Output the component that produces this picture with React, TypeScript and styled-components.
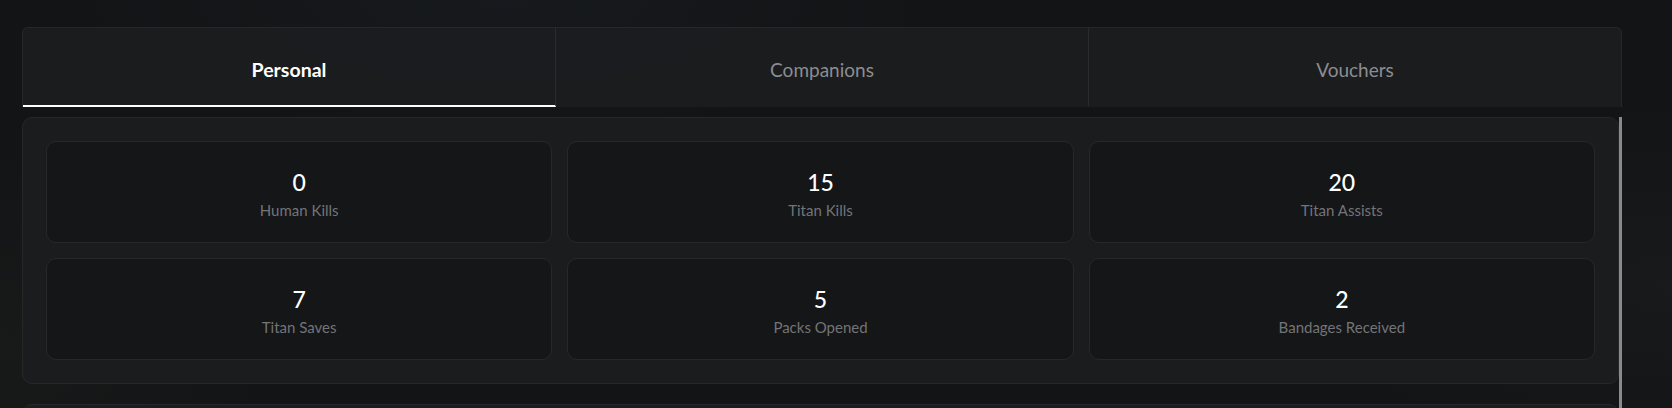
import React, { useState } from 'react';
import styled, { createGlobalStyle } from 'styled-components';

const GlobalStyle = createGlobalStyle`
  * {
    box-sizing: border-box;
  }
  html, body {
    margin: 0;
    height: 100%;
    overflow: hidden;
  }
  body {
    font-family: Lato, 'Open Sans', sans-serif;
    color: #fff;
    background:
      radial-gradient(ellipse 380px 280px at 0% 85%, rgba(30, 33, 29, 0.45), transparent 70%),
      radial-gradient(ellipse 600px 200px at 30% 0%, rgba(26, 30, 36, 0.5), transparent 70%),
      radial-gradient(ellipse 500px 260px at 100% 70%, rgba(30, 32, 32, 0.45), transparent 70%),
      #131416;
  }
`;

const Page = styled.div`
  width: 1600px;
  margin-left: 22px;
  padding-top: 27px;
`;

const TabBar = styled.div`
  display: flex;
  height: 80px;
  border: 1px solid #26272a;
  border-bottom: none;
  border-radius: 6px 6px 0 0;
  background: rgba(28, 29, 32, 0.92);
  overflow: hidden;
`;

const Tab = styled.button<{ active: boolean }>`
  flex: 1;
  display: flex;
  align-items: center;
  justify-content: center;
  padding: 6px 0 0;
  background: transparent;
  border: none;
  border-right: 1px solid #2a2b2e;
  border-bottom: 2px solid ${(p) => (p.active ? '#ffffff' : 'transparent')};
  color: ${(p) => (p.active ? '#ffffff' : '#8c8d90')};
  font-family: inherit;
  font-size: ${(p) => (p.active ? '19.5px' : '19px')};
  font-weight: ${(p) => (p.active ? 700 : 400)};
  cursor: pointer;
  &:last-child {
    border-right: none;
  }
`;

const ScrollArea = styled.div`
  display: flex;
  margin-top: 10px;
  height: 560px;
  overflow: hidden;
`;

const ScrollContent = styled.div`
  flex: 1;
  min-width: 0;
`;

const ScrollThumb = styled.div`
  width: 3px;
  flex-shrink: 0;
  background: #8a8a8b;
`;

const Panel = styled.div<{ minHeight?: number }>`
  background: #1b1c1e;
  border: 1px solid #26272a;
  border-radius: 10px;
  padding: 23px;
  margin-bottom: 20px;
  min-height: ${(p) => (p.minHeight ? `${p.minHeight}px` : 'auto')};
`;

const StatGrid = styled.div`
  display: grid;
  grid-template-columns: repeat(3, 1fr);
  gap: 15px;
`;

const StatCard = styled.div`
  height: 102px;
  display: flex;
  flex-direction: column;
  align-items: center;
  padding-top: 26px;
  gap: 4px;
  background: #151618;
  border: 1px solid #27282b;
  border-radius: 10px;
`;

const StatValue = styled.div`
  font-size: 23px;
  font-weight: 500;
  line-height: 28px;
  color: #ffffff;
`;

const StatLabel = styled.div`
  font-size: 15px;
  line-height: 20px;
  color: #737477;
`;

const tabs = ['Personal', 'Companions', 'Vouchers'];

const personalStats = [
  { value: 0, label: 'Human Kills' },
  { value: 15, label: 'Titan Kills' },
  { value: 20, label: 'Titan Assists' },
  { value: 7, label: 'Titan Saves' },
  { value: 5, label: 'Packs Opened' },
  { value: 2, label: 'Bandages Received' },
];

export default function App() {
  const [active, setActive] = useState('Personal');

  return (
    <>
      <GlobalStyle />
      <Page>
        <TabBar>
          {tabs.map((t) => (
            <Tab key={t} active={active === t} onClick={() => setActive(t)}>
              {t}
            </Tab>
          ))}
        </TabBar>
        <ScrollArea>
          <ScrollContent>
            <Panel>
              <StatGrid>
                {personalStats.map((s) => (
                  <StatCard key={s.label}>
                    <StatValue>{s.value}</StatValue>
                    <StatLabel>{s.label}</StatLabel>
                  </StatCard>
                ))}
              </StatGrid>
            </Panel>
            <Panel minHeight={300} />
          </ScrollContent>
          <ScrollThumb />
        </ScrollArea>
      </Page>
    </>
  );
}
